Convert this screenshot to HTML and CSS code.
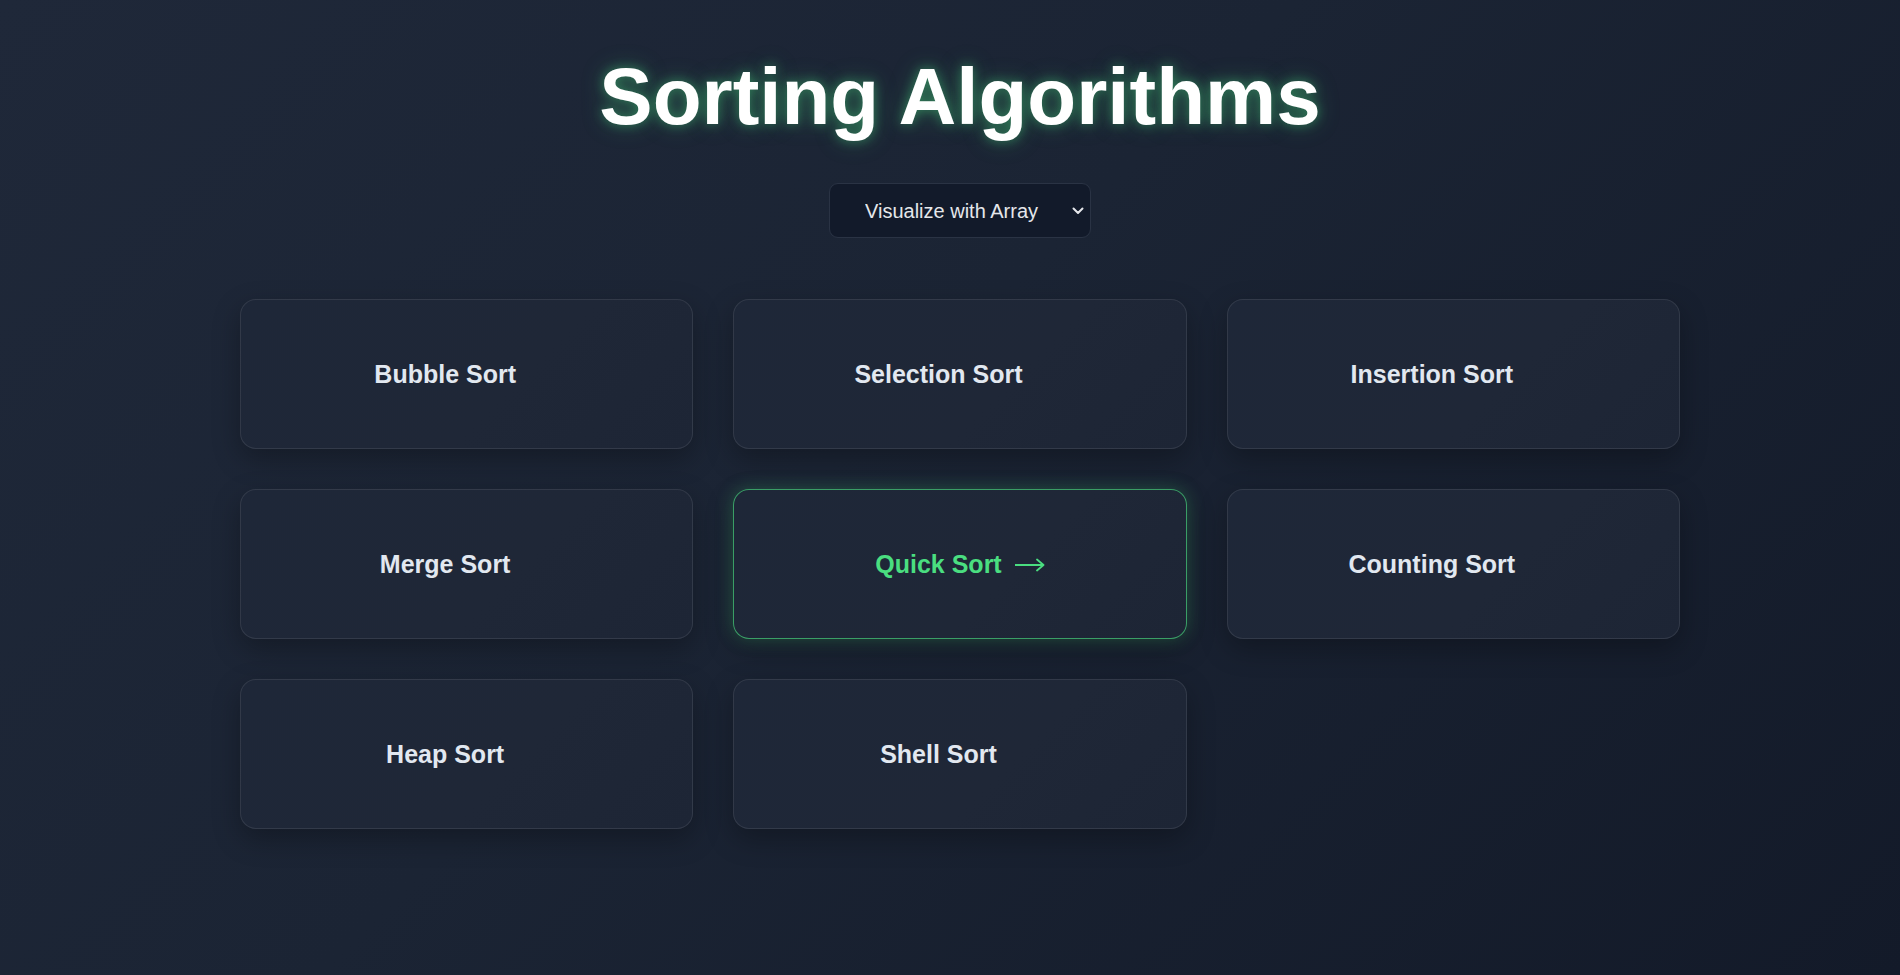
FILE: index.html
```html
<!DOCTYPE html>
<html lang="en">
<head>
<meta charset="UTF-8">
<title>Sorting Algorithms</title>
<link rel="stylesheet" href="styles.css">
</head>
<body>
<main class="page">
  <h1 class="title">Sorting Algorithms</h1>
  <div class="select-wrap">
    <select class="mode-select">
      <option>Visualize with Array</option>
      <option>Visualize with Bars</option>
    </select>
    <svg class="chevron" width="12" height="8" viewBox="0 0 12 8" aria-hidden="true"><path d="M1.5 1.5 L6 6 L10.5 1.5" fill="none" stroke="#e5e7eb" stroke-width="2" stroke-linecap="round" stroke-linejoin="round"/></svg>
  </div>
  <section class="grid">
    <a class="card" href="#"><span class="label">Bubble Sort</span><svg class="arrow" width="30" height="14" viewBox="0 0 30 14" aria-hidden="true"><path d="M0 7 H28.5 M22 1.5 L28.5 7 L22 12.5" fill="none" stroke="currentColor" stroke-width="1.8" stroke-linecap="round" stroke-linejoin="round"/></svg></a>
    <a class="card" href="#"><span class="label">Selection Sort</span><svg class="arrow" width="30" height="14" viewBox="0 0 30 14" aria-hidden="true"><path d="M0 7 H28.5 M22 1.5 L28.5 7 L22 12.5" fill="none" stroke="currentColor" stroke-width="1.8" stroke-linecap="round" stroke-linejoin="round"/></svg></a>
    <a class="card" href="#"><span class="label">Insertion Sort</span><svg class="arrow" width="30" height="14" viewBox="0 0 30 14" aria-hidden="true"><path d="M0 7 H28.5 M22 1.5 L28.5 7 L22 12.5" fill="none" stroke="currentColor" stroke-width="1.8" stroke-linecap="round" stroke-linejoin="round"/></svg></a>
    <a class="card" href="#"><span class="label">Merge Sort</span><svg class="arrow" width="30" height="14" viewBox="0 0 30 14" aria-hidden="true"><path d="M0 7 H28.5 M22 1.5 L28.5 7 L22 12.5" fill="none" stroke="currentColor" stroke-width="1.8" stroke-linecap="round" stroke-linejoin="round"/></svg></a>
    <a class="card card-active" href="#"><span class="label">Quick Sort</span><svg class="arrow" width="30" height="14" viewBox="0 0 30 14" aria-hidden="true"><path d="M0 7 H28.5 M22 1.5 L28.5 7 L22 12.5" fill="none" stroke="currentColor" stroke-width="1.8" stroke-linecap="round" stroke-linejoin="round"/></svg></a>
    <a class="card" href="#"><span class="label">Counting Sort</span><svg class="arrow" width="30" height="14" viewBox="0 0 30 14" aria-hidden="true"><path d="M0 7 H28.5 M22 1.5 L28.5 7 L22 12.5" fill="none" stroke="currentColor" stroke-width="1.8" stroke-linecap="round" stroke-linejoin="round"/></svg></a>
    <a class="card" href="#"><span class="label">Heap Sort</span><svg class="arrow" width="30" height="14" viewBox="0 0 30 14" aria-hidden="true"><path d="M0 7 H28.5 M22 1.5 L28.5 7 L22 12.5" fill="none" stroke="currentColor" stroke-width="1.8" stroke-linecap="round" stroke-linejoin="round"/></svg></a>
    <a class="card" href="#"><span class="label">Shell Sort</span><svg class="arrow" width="30" height="14" viewBox="0 0 30 14" aria-hidden="true"><path d="M0 7 H28.5 M22 1.5 L28.5 7 L22 12.5" fill="none" stroke="currentColor" stroke-width="1.8" stroke-linecap="round" stroke-linejoin="round"/></svg></a>
  </section>
</main>
</body>
</html>
```

FILE: styles.css
```css
* { box-sizing: border-box; }

html, body {
  margin: 0;
  padding: 0;
}

body {
  min-height: 100vh;
  background: linear-gradient(135deg, #1f2839 0%, #1b2434 45%, #131a29 100%);
  font-family: "Liberation Sans", Arial, sans-serif;
  color: #e5e7eb;
  overflow: hidden;
}

.page {
  display: flex;
  flex-direction: column;
  align-items: center;
  padding: 52px 0 0 20px;
}

.title {
  margin: 0;
  font-size: 80px;
  font-weight: 700;
  line-height: 89px;
  color: #ffffff;
  text-shadow: 0 0 12px rgba(74, 222, 128, 0.45), 0 0 24px rgba(74, 222, 128, 0.25);
}

.select-wrap {
  position: relative;
  margin-top: 42px;
}

.mode-select {
  appearance: none;
  -webkit-appearance: none;
  width: 262px;
  height: 55px;
  padding: 0 40px 0 35px;
  background: #121a2a;
  color: #e5e7eb;
  border: 1px solid #2a3344;
  border-radius: 9px;
  font-family: "Liberation Sans", Arial, sans-serif;
  font-size: 20px;
  outline: none;
}

.chevron {
  position: absolute;
  right: 7px;
  top: 24px;
  pointer-events: none;
}

.grid {
  width: 1440px;
  margin-top: 61px;
  display: grid;
  grid-template-columns: repeat(3, 1fr);
  column-gap: 40px;
  row-gap: 40px;
}

.card {
  height: 150px;
  display: flex;
  align-items: center;
  justify-content: center;
  gap: 13px;
  padding-top: 1px;
  text-decoration: none;
  color: #e2e8f0;
  background: linear-gradient(135deg, #1e2738 0%, #1f2737 60%, #1d2535 100%);
  border: 1px solid rgba(255, 255, 255, 0.09);
  border-radius: 16px;
  box-shadow: 0 10px 28px rgba(0, 0, 0, 0.28);
}

.label {
  font-size: 25px;
  font-weight: 700;
}

.arrow {
  flex: none;
  opacity: 0;
  color: #4ade80;
  margin-top: 1px;
}

.card-active {
  border-color: rgba(74, 222, 128, 0.65);
  box-shadow: 0 0 18px rgba(74, 222, 128, 0.28), 0 10px 28px rgba(0, 0, 0, 0.28);
  color: #4ade80;
}

.card-active .arrow {
  opacity: 1;
}
```
